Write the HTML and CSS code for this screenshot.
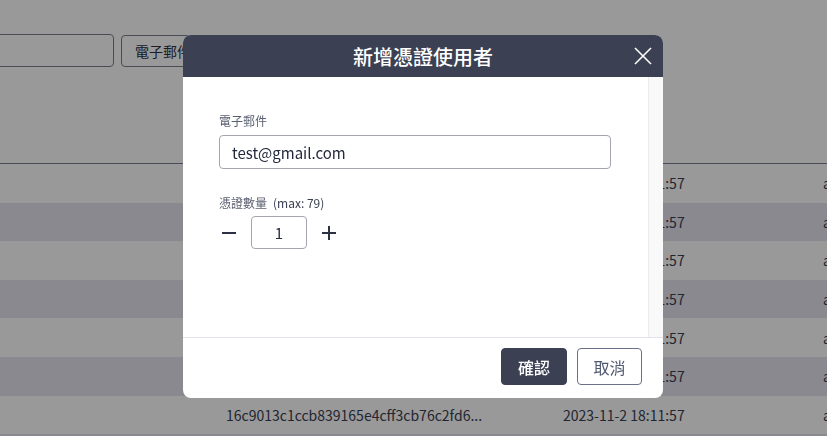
FILE: index.html
```html
<!DOCTYPE html>
<html lang="zh-Hant">
<head>
    <meta charset="UTF-8">
    <meta name="viewport" content="width=device-width, initial-scale=1.0">
    <title>憑證使用者</title>
    <link rel="stylesheet" href="styles.css">
</head>
<body>
    <div class="page">
        <!-- toolbar -->
        <div class="toolbar">
            <input class="search" type="text">
            <button class="filter">電子郵件</button>
        </div>

        <div class="table-head"></div>

        <div class="rows">
            <div class="row"><span>16c9013c1ccb839165e4cff3cb76c2fd6...</span><span>2023-11-2 18:11:57</span><span>active</span></div>
            <div class="row alt"><span>16c9013c1ccb839165e4cff3cb76c2fd6...</span><span>2023-11-2 18:11:57</span><span>active</span></div>
            <div class="row"><span>16c9013c1ccb839165e4cff3cb76c2fd6...</span><span>2023-11-2 18:11:57</span><span>active</span></div>
            <div class="row alt"><span>16c9013c1ccb839165e4cff3cb76c2fd6...</span><span>2023-11-2 18:11:57</span><span>active</span></div>
            <div class="row"><span>16c9013c1ccb839165e4cff3cb76c2fd6...</span><span>2023-11-2 18:11:57</span><span>active</span></div>
            <div class="row alt"><span>16c9013c1ccb839165e4cff3cb76c2fd6...</span><span>2023-11-2 18:11:57</span><span>active</span></div>
            <div class="row"><span>16c9013c1ccb839165e4cff3cb76c2fd6...</span><span>2023-11-2 18:11:57</span><span>active</span></div>
            <div class="row alt"><span>16c9013c1ccb839165e4cff3cb76c2fd6...</span><span>2023-11-2 18:11:57</span><span>active</span></div>
        </div>
    </div>

    <div class="backdrop"></div>

    <!-- dialog -->
    <div class="modal">
        <div class="modal-header">
            <h2>新增憑證使用者</h2>
            <button class="close" aria-label="close">
                <svg width="18" height="18" viewBox="0 0 18 18">
                    <path d="M1 1 L17 17 M17 1 L1 17" stroke="#fff" stroke-width="1.6" fill="none"/>
                </svg>
            </button>
        </div>

        <div class="modal-body">
            <div class="form">
                <label class="field-label">電子郵件</label>
                <input class="field-input" type="text" value="test@gmail.com">

                <label class="field-label count-label">憑證數量<span class="max">(max: 79)</span></label>
                <div class="stepper">
                    <button class="step-btn" aria-label="minus">
                        <svg width="14" height="14" viewBox="0 0 14 14"><path d="M0 7 H14" stroke="#2b3142" stroke-width="2"/></svg>
                    </button>
                    <input class="step-value" type="text" value="1">
                    <button class="step-btn" aria-label="plus">
                        <svg width="14" height="14" viewBox="0 0 14 14"><path d="M0 7 H14 M7 0 V14" stroke="#2b3142" stroke-width="2"/></svg>
                    </button>
                </div>
            </div>
            <div class="scroll-track"></div>
        </div>

        <div class="modal-footer">
            <button class="btn btn-primary">確認</button>
            <button class="btn btn-outline">取消</button>
        </div>
    </div>
</body>
</html>
```

FILE: styles.css
```css
* {
    margin: 0;
    padding: 0;
    box-sizing: border-box;
}

body {
    font-family: "Noto Sans CJK TC", "Noto Sans", sans-serif;
    background: #fff;
    color: #3a4052;
    overflow: hidden;
    width: 827px;
    height: 436px;
}

.page {
    width: 100%;
}

.toolbar {
    display: flex;
    align-items: center;
    padding-top: 34px;
    height: 67px;
}

.search {
    width: 124px;
    height: 33px;
    margin-left: -10px;
    border: 1px solid #7a7f8c;
    border-radius: 4px;
    background: #fff;
}

.filter {
    width: 157px;
    height: 32px;
    margin-left: 7px;
    padding-left: 13px;
    text-align: left;
    border: 1px solid #7a7f8c;
    border-radius: 4px;
    background: #fff;
    font-family: inherit;
    font-size: 14px;
    color: #2b3142;
}

.table-head {
    height: 97px;
    border-bottom: 1px solid #7b8096;
}

.row {
    display: grid;
    grid-template-columns: 226px 337px 260px 200px;
    align-items: center;
    height: 38.6px;
    font-size: 14px;
    color: #3a4052;
    background: #fff;
    white-space: nowrap;
}

.row span:first-child {
    grid-column: 2;
}

.row.alt {
    background: #e4e5ee;
}

.backdrop {
    position: fixed;
    inset: 0;
    background: rgba(0, 0, 0, 0.4);
}

.modal {
    position: fixed;
    left: 183px;
    top: 35px;
    width: 480px;
    height: 363px;
    background: #fff;
    border-radius: 8px;
    overflow: hidden;
    display: flex;
    flex-direction: column;
}

.modal-header {
    height: 42px;
    background: #3b4153;
    display: flex;
    align-items: center;
    justify-content: center;
    position: relative;
}

.modal-header h2 {
    color: #fff;
    font-size: 20px;
    font-weight: 500;
    letter-spacing: 0;
}

.close {
    position: absolute;
    right: 11px;
    top: 12px;
    background: none;
    border: none;
    display: flex;
}

.modal-body {
    flex: 1;
    display: flex;
}

.form {
    flex: 1;
    padding: 35px 37px 0 36px;
    display: flex;
    flex-direction: column;
    align-items: flex-start;
}

.field-label {
    font-size: 12px;
    line-height: 17px;
    color: #5b6070;
    margin-bottom: 6px;
}

.count-label {
    margin-bottom: 5px;
}

.max {
    margin-left: 6px;
    color: #3a4052;
}

.field-input {
    width: 100%;
    height: 34px;
    border: 1px solid #a3a6ae;
    border-radius: 4px;
    padding: 0 12px;
    font-family: inherit;
    font-size: 15px;
    color: #232a3b;
    margin-bottom: 25px;
}

.stepper {
    display: flex;
    align-items: center;
    gap: 15px;
    margin-left: 3px;
}

.step-btn {
    background: none;
    border: none;
    display: flex;
    width: 14px;
}

.step-value {
    width: 56px;
    height: 33px;
    border: 1px solid #a3a6ae;
    border-radius: 4px;
    text-align: center;
    font-family: inherit;
    font-size: 15px;
    color: #232a3b;
}

.scroll-track {
    width: 15px;
    background: #f9f9fa;
    border-left: 1px solid #ececee;
}

.modal-footer {
    height: 61px;
    border-top: 1px solid #e3e4ea;
    display: flex;
    justify-content: flex-end;
    align-items: flex-start;
    gap: 10px;
    padding: 10px 21px 0 0;
}

.btn {
    height: 37px;
    border-radius: 4px;
    font-family: inherit;
    font-size: 16px;
    font-weight: 500;
}

.btn-primary {
    width: 66px;
    background: #3b4153;
    border: 1px solid #3b4153;
    color: #fff;
}

.btn-outline {
    width: 65px;
    background: #fff;
    border: 1px solid #6b7088;
    color: #525a72;
    font-weight: 400;
}
```
